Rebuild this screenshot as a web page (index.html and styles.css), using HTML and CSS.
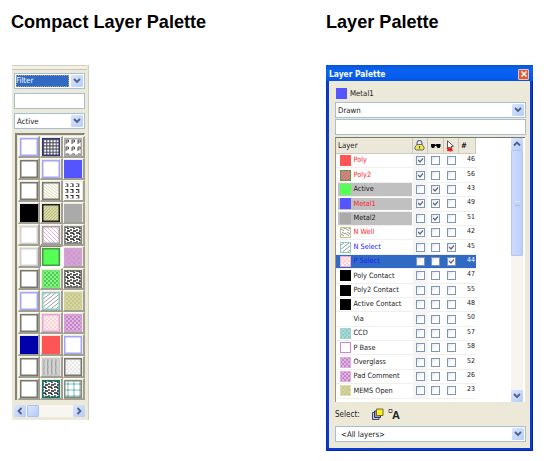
FILE: index.html
```html
<!DOCTYPE html>
<html lang="en">
<head>
<meta charset="utf-8">
<title>Layer Palette</title>
<link rel="stylesheet" href="styles.css">
</head>
<body>
<svg class="defs" width="0" height="0">
  <defs>
    <pattern id="grid" width="3.200" height="3.200" patternUnits="userSpaceOnUse"><rect width="4" height="4" fill="#fff"/><path d="M0 1.500H4M1.500 0V4" stroke="#40424e" stroke-width="1"/></pattern>
    <pattern id="pe" width="6" height="7" patternUnits="userSpaceOnUse"><rect width="6" height="7" fill="#fff"/><path d="M2 6V2H4.500V4H2" fill="none" stroke="#505050" stroke-width="1"/></pattern>
    <pattern id="dash" width="5.500" height="6" patternUnits="userSpaceOnUse"><rect width="5.500" height="6" fill="#fff"/><path d="M1 1.500H4M3.500 1V5M1 4.500H2" fill="none" stroke="#222" stroke-width="1.200"/></pattern>
    <pattern id="weave" width="6" height="6" patternUnits="userSpaceOnUse"><rect width="6" height="6" fill="#fff"/><path d="M0 1H3L4.500 3M1 3V5M3 5H6" fill="none" stroke="#202020" stroke-width="1.300"/></pattern>
    <pattern id="hatch" width="5" height="5" patternUnits="userSpaceOnUse"><rect width="5" height="5" fill="#fff"/><path d="M0 1L4 4M2 0L5 2" stroke="#777c72" stroke-width=".8"/></pattern>
    <pattern id="cream" width="4" height="3" patternUnits="userSpaceOnUse"><rect width="4" height="3" fill="#fafaf0"/><path d="M0 0L4 3" stroke="#d4d6bd" stroke-width=".8"/></pattern>
    <pattern id="khaki" width="3" height="3" patternUnits="userSpaceOnUse"><rect width="3" height="3" fill="#d8d8a4"/><path d="M0 3L3 0" stroke="#b4b47a" stroke-width=".8"/></pattern>
    <pattern id="lilac" width="4" height="4" patternUnits="userSpaceOnUse"><rect width="4" height="4" fill="#fff"/><path d="M0 0L4 4" stroke="#e0b4e0" stroke-width="1"/></pattern>
    <pattern id="slash" width="5" height="4" patternUnits="userSpaceOnUse"><rect width="5" height="4" fill="#fff"/><path d="M0 4L5 0" stroke="#88908f" stroke-width=".9"/></pattern>
    <pattern id="purple" width="4" height="4" patternUnits="userSpaceOnUse"><rect width="4" height="4" fill="#e0b5e0"/><path d="M0 0h2v2H0zM2 2h2v2H2z" fill="#c783c9"/></pattern>
    <pattern id="plum" width="5" height="5" patternUnits="userSpaceOnUse"><rect width="5" height="5" fill="#d4a2d4"/><path d="M0 0L5 5M5 0L0 5" stroke="#c994cb" stroke-width=".8"/></pattern>
    <pattern id="green" width="4" height="4" patternUnits="userSpaceOnUse"><rect width="4" height="4" fill="#93ee93"/><path d="M0 0h2v2H0zM2 2h2v2H2z" fill="#42d442"/></pattern>
    <pattern id="olive" width="4" height="4" patternUnits="userSpaceOnUse"><rect width="4" height="4" fill="#d6d6a2"/><path d="M0 0h2v2H0zM2 2h2v2H2z" fill="#c7c78a"/></pattern>
    <pattern id="pink" width="4" height="4" patternUnits="userSpaceOnUse"><rect width="4" height="4" fill="#fff1f1"/><path d="M0 0h2v2H0zM2 2h2v2H2z" fill="#ffd0d4"/></pattern>
    <pattern id="bars" width="4" height="6" patternUnits="userSpaceOnUse"><rect width="4" height="6" fill="#d4d4d4"/><path d="M1.500 0L2 3L1.500 6" fill="none" stroke="#a2a2a2" stroke-width="1.400"/></pattern>
    <pattern id="dots" width="4" height="4" patternUnits="userSpaceOnUse"><rect width="4" height="4" fill="#f7f7f7"/><path d="M0 0h2v2H0zM2 2h2v2H2z" fill="#eaeaea"/></pattern>
    <pattern id="plaid" width="6" height="6" patternUnits="userSpaceOnUse"><rect width="6" height="6" fill="#fff"/><path d="M0 4H6M4 0V6" stroke="#c0e2df" stroke-width="2"/><path d="M3 3h2v2H3z" fill="#7fc0bb"/></pattern>
    <pattern id="teal" width="4" height="4" patternUnits="userSpaceOnUse"><rect width="4" height="4" fill="#a8dad7"/><path d="M0 0h2v2H0zM2 2h2v2H2z" fill="#8fcbc8"/></pattern>
    <pattern id="brick" width="3" height="3" patternUnits="userSpaceOnUse"><rect width="3" height="3" fill="#dc8482"/><path d="M0 3L3 0" stroke="#b07870" stroke-width="1"/></pattern>
  </defs>
</svg>
<main class="page">
  <section class="column column-compact">
    <h2>Compact Layer Palette</h2>
    <div class="compact">
      <div class="grip"></div>
      <div class="combo"><span class="picked">Filter</span><span class="drop"><svg viewBox="0 0 8 6"><path d="M1 1l3 3 3-3"/></svg></span></div>
      <div class="combo"></div>
      <div class="combo"><span class="value">Active</span><span class="drop"><svg viewBox="0 0 8 6"><path d="M1 1l3 3 3-3"/></svg></span></div>
      <div class="swatches" id="swatches"></div>
      <div class="hscroll">
        <span class="sbtn"><svg viewBox="0 0 8 8"><path d="M5.500 1l-3 3 3 3"/></svg></span>
        <span class="sbtn grab"></span>
        <span class="sbtn end"><svg viewBox="0 0 8 8"><path d="M2.500 1l3 3-3 3"/></svg></span>
      </div>
    </div>
  </section>
  <section class="column">
    <h2>Layer Palette</h2>
    <div class="window">
      <header class="titlebar"><span>Layer Palette</span><span class="close"><svg viewBox="0 0 8 8"><path d="M1.500 1.500l5 5M6.500 1.500l-5 5"/></svg></span></header>
      <div class="client">
        <div class="current"><span class="chip"></span><span>Metal1</span></div>
        <div class="combo"><span class="value">Drawn</span><span class="drop"><svg viewBox="0 0 8 6"><path d="M1 1l3 3 3-3"/></svg></span></div>
        <div class="combo search"></div>
        <div class="list">
          <div class="table">
            <div class="thead">
              <span class="th-layer">Layer</span>
              <span class="th"><svg width="11" height="11" viewBox="0 0 11 11"><path d="M3 5V3a2.500 2.500 0 0 1 5 0v2" fill="none" stroke="#6468b5" stroke-width="1.200"/><path d="M3 4.500h5L10 7v2L9 10H2L1 9V7z" fill="#f4ed27" stroke="#5055a5" stroke-width=".9"/><path d="M5.500 6v2.500" stroke="#50507a" stroke-width="1.200"/></svg></span>
              <span class="th"><svg width="11" height="11" viewBox="0 0 11 11"><path d="M1 4h3.500l1 .8 1-.8h4v2.500L9.500 8h-2L6.300 6H5L4 8H2L1 6.500z" fill="#050505"/></svg></span>
              <span class="th"><svg width="11" height="12" viewBox="0 0 11 12"><path d="M2.500 .8v7.700l1.800-1.500L6 9.500l1-.6L6 6.500l2.500-.2z" fill="#fff" stroke="#333" stroke-width=".8"/><path d="M1.800 8.500L3.500 8l1 .7 1.500-1.200 .6 1.600 1 2-1.600-.5-1 .9-.9-.9-1.700.4.5-1.300z" fill="#f01010" stroke="#f01010" stroke-width=".6"/></svg></span>
              <span class="th th-num">#</span>
            </div>
            <div id="rows"></div>
          </div>
          <div class="vscroll">
            <span class="sbtn"><svg viewBox="0 0 8 6"><path d="M1 4.500l3-3 3 3"/></svg></span>
            <span class="thumb"><i></i></span>
            <span class="sbtn end"><svg viewBox="0 0 8 6"><path d="M1 1l3 3 3-3"/></svg></span>
          </div>
        </div>
        <div class="select">
          <span>Select:</span>
          <svg class="stack" width="13" height="13" viewBox="0 0 13 13"><path d="M1.500 4.500h6.500v7H1.500z" fill="#c8c8dc" stroke="#44446a"/><path d="M3.500 3h6v6.500h-6z" fill="#9898c0" stroke="#34345a"/><path d="M5.500 1h6.500v6.500H5.500z" fill="#ffed24" stroke="#716d30"/></svg>
          <svg width="5" height="13" viewBox="0 0 5 13"><path d="M1 1.500h3v3H1z" fill="#fff" stroke="#333" stroke-width=".8"/></svg>
          <b class="glyph">A</b>
        </div>
        <div class="combo all"><span class="value">&lt;All layers&gt;</span><span class="drop"><svg viewBox="0 0 8 6"><path d="M1 1l3 3 3-3"/></svg></span></div>
      </div>
    </div>
  </section>
</main>
<script src="app.js"></script>
</body>
</html>
```

FILE: styles.css
```css
* { box-sizing: border-box; }
body { margin: 0; background: #fff; width: 554px; height: 461px; overflow: hidden; font: 7.8px "DejaVu Sans Condensed", "DejaVu Sans", sans-serif; color: #222; }
.defs { display: block; }
svg { display: block; flex: none; }
.page { display: flex; padding: 12px 0 0 11px; }
.column { width: 207px; }
.column-compact { width: 315px; }
h2 { margin: 0 0 32px; height: 21px; font: bold 18.1px/21px "Liberation Sans", sans-serif; color: #000; white-space: nowrap; }

.compact { width: 77px; height: 355px; margin-left: 1px; padding: 0 3px 0 2px; background: #ece9d8; border-right: 1px solid #d0cdbe; }
.grip { height: 5px; margin: 0 -2px 3px; border-top: 1px solid #d3d0c2; border-bottom: 1px solid #c9c6b6; background: #f3f1e6; }
.combo { display: flex; align-items: stretch; height: 16px; border: 1px solid #a7bfd2; background: #fff; padding: 1px; }
.compact .combo { margin-bottom: 4px; }
.combo .value { flex: 1; padding-left: 1px; line-height: 13px; white-space: nowrap; }
.picked { flex: 1; margin: 0 2px 0 0; line-height: 12px; background: #316ac5; color: #fff; outline: 1px dotted #b6a078; outline-offset: -1px; }
.drop, .sbtn { display: flex; flex: none; align-items: center; justify-content: center; width: 12px; background: linear-gradient(135deg, #dbe6fe, #b5cbf8); border-radius: 1px; }
.drop svg { width: 8px; height: 6px; }
.drop path, .sbtn path { fill: none; stroke: #4d6185; stroke-width: 1.8; }
.swatches { display: grid; grid-template-columns: repeat(3, 22.3px); grid-auto-rows: 22px; height: 267px; margin: 1px 0 0 1px; width: 70px; padding: 1px 0 0 1px; border-left: 2px solid #85837a; border-top: 2px solid #85837a; border-right: 1px solid #f8f6ed; background: #ece9d8; }
.cell { display: flex; align-items: center; justify-content: center; border-right: 2px solid #a19e92; border-bottom: 2px solid #a19e92; border-left: 1px solid #faf9f3; border-top: 1px solid #faf9f3; }
.cell.on { border-color: #8a887c #fff #fff #8a887c; }
.hscroll { display: flex; height: 12px; margin-top: 5px; background: #f7f6f0; }
.hscroll .sbtn { height: 12px; }
.sbtn svg { width: 8px; height: 8px; }
.grab { margin-left: 1px; border: 1px solid #a9c1f5; }
.hscroll .end { margin-left: auto; }

.window { width: 207px; height: 386px; padding: 0 3px 3px; background: #0b3bd4; box-shadow: inset 1px 0 #0831b4, inset -1px -1px #0825a0; }
.titlebar { display: flex; align-items: center; justify-content: space-between; height: 16px; margin: 0 -3px; padding: 2px 4px 0 3px; background: linear-gradient(#0755d8, #0b62ef 30%, #055df0 75%, #0554dd); color: #fff; font: bold 8.4px/13px "DejaVu Sans Condensed", sans-serif; }
.close { display: flex; align-items: center; justify-content: center; width: 11px; height: 11px; border: 1px solid #f0c0b5; border-radius: 1px; background: #df5d3b; }
.close svg { width: 8px; height: 8px; }
.close path { stroke: #fff; stroke-width: 1.5; }
.client { height: 367px; padding: 7px 3px 0 7px; background: #ece9d8; }
.current { display: flex; gap: 3px; height: 14px; line-height: 11px; }
.chip { width: 11px; height: 11px; background: #5555ff; }
.client .combo { width: 191px; margin-left: -1px; }
.client .search { margin-top: 1px; }
.list { display: flex; justify-content: space-between; width: 190px; height: 265px; margin: 2px 0 0 -1px; padding: 0 2px 0 0; border-left: 1px solid #96958c; border-top: 1px solid #77766f; background: #fff; }
.table { width: 140px; }
.thead { display: flex; height: 16px; background: #ebe8d9; border-bottom: 1px solid #cfccbd; }
.th-layer { width: 76.5px; padding-left: 2px; line-height: 15px; border-right: 1px solid #cbc8b9; }
.th { display: flex; align-items: center; justify-content: center; width: 15.5px; border-right: 1px solid #cbc8b9; }
.th-num { width: 17px; font-style: italic; font-weight: bold; justify-content: flex-start; padding-left: 2px; }
.row { display: flex; align-items: center; height: 14.4px; border-bottom: 1px solid #f0efeb; white-space: nowrap; }
.name { display: flex; align-items: center; width: 74px; height: 12.5px; margin: 0 1.5px; padding-left: 2px; gap: 3px; font-size: 7.3px; }
.name span { line-height: 9px; margin-top: -1.5px; }
.shaded .name { background: #c0c0c0; }
.red { color: #f8262d; }
.blue { color: #2020f5; }
.check { display: flex; align-items: center; justify-content: center; width: 15.3px; height: 14px; }
.check:nth-child(2) { background: #f5f5f5; }
.check i { width: 9px; height: 9px; border: 1px solid #8096b5; background: linear-gradient(135deg, #dfe3ec, #fff 55%); }
.check svg { width: 7px; height: 7px; }
.check path { fill: none; stroke: #606572; stroke-width: 1.2; }
.num { width: 16px; text-align: right; font-size: 6.9px; line-height: 9px; margin-top: -2px; }
.selected { background: #316ac5; }
.selected .check { background: none; }
.selected .num { color: #fff; }
.vscroll { display: flex; flex-direction: column; width: 12px; background: #f6f5ef; }
.vscroll .sbtn { height: 12px; }
.vscroll .sbtn svg { height: 6px; }
.vscroll .end { margin-top: auto; }
.thumb { display: flex; align-items: center; justify-content: center; height: 106px; border: 1px solid #b0c6f5; border-radius: 1px; background: linear-gradient(90deg, #cbdafd, #bdcffa); }
.thumb i { width: 5px; height: 5px; border-top: 1px solid #e4edff; border-bottom: 1px solid #a2bcf0; }
.select { display: flex; align-items: center; height: 24px; margin-left: -1px; }
.select > span { width: 36px; font-size: 8px; }
.select .stack { margin-right: 4px; }
.glyph { font: bold 11px/12px "Liberation Sans", sans-serif; color: #222; margin: 2px 0 0 -1px; }
.all .value { padding-left: 4px; font-size: 7.8px; }
```

FILE: app.js
```js
const LIGHT = "#a5a5ff", GRAY = "#777770", PALE = "#d2d2d2";
// Each swatch: [fill, border]
const cells = [
  ["#fff", LIGHT], ["grid", "#343474"], ["pe", "#aaa"],
  ["#fff", GRAY], ["#fff", LIGHT], ["#5555ff", "#5555ff"],
  ["#fff", GRAY], ["cream", GRAY], ["dash", "#fff"],
  ["#000", "#000"], ["khaki", "#202020"], ["#aaa", "#aaa"],
  ["#fff", PALE], ["lilac", "#a69fa6"], ["weave", "#888"],
  ["#fff", PALE], ["#55ff55", "#4a984a"], ["plum", "#d4a2d4"],
  ["#fff", GRAY], ["green", "#7be67b"], ["weave", GRAY],
  ["#fff", LIGHT], ["slash", "#91cac7"], ["olive", "#d0d09b"],
  ["#fff", GRAY], ["pink", "#e2a5d4"], ["purple", "#d5a0d6"],
  ["#0000aa", "#0000aa"], ["#ff5555", "#ff5555"], ["#fff", LIGHT],
  ["#fff", GRAY], ["bars", "#c8c8c8"], ["dots", GRAY],
  ["#fff", GRAY], ["weave", "#147472"], ["plaid", "#858b81"]
];
// Each layer: [name, number, text class, shaded, checked columns, fill, border]
const layers = [
  ["Poly", 46, "red", 0, "0", "#ff5555", "#ff5555"],
  ["Poly2", 56, "red", 0, "0", "brick", "#5b9b45"],
  ["Active", 43, "", 1, "1", "#55ff55", "#55ff55"],
  ["Metal1", 49, "red", 1, "01", "#5555ff", "#5555ff"],
  ["Metal2", 51, "", 1, "1", "#aaa", "#aaa"],
  ["N Well", 42, "red", 0, "0", "hatch", "#c5c58b"],
  ["N Select", 45, "blue", 0, "2", "slash", "#8bcac5"],
  ["P Select", 44, "blue", 0, "2", "pink", "#edacd0"],
  ["Poly Contact", 47, "", 0, "", "#000", "#000"],
  ["Poly2 Contact", 55, "", 0, "", "#000", "#000"],
  ["Active Contact", 48, "", 0, "", "#000", "#000"],
  ["Via", 50, "", 0, "", "#fff", "#fff"],
  ["CCD", 57, "", 0, "", "teal", "#9fd4d1"],
  ["P Base", 58, "", 0, "", "#fff", "#cf86d2"],
  ["Overglass", 52, "", 0, "", "purple", "#dcb0dd"],
  ["Pad Comment", 26, "", 0, "", "purple", "#dcb0dd"],
  ["MEMS Open", 23, "", 0, "", "olive", "#dbdbae"]
];

function swatch(fill, border, size, stroke) {
  const paint = fill[0] === "#" ? fill : `url(#${fill})`;
  return `<svg width="${size}" height="${size}"><rect x="${stroke / 2}" y="${stroke / 2}" width="${size - stroke}" height="${size - stroke}" fill="${paint}" stroke="${border}" stroke-width="${stroke}"/></svg>`;
}

document.getElementById("swatches").innerHTML = cells.map(([fill, border], i) =>
  `<div class="cell${i === 16 ? " on" : ""}">${swatch(fill, border, 18, 1.5)}</div>`).join("");

document.getElementById("rows").innerHTML = layers.map(([name, num, tone, shaded, checks, fill, border]) => {
  const boxes = [0, 1, 2].map(c =>
    `<span class="check"><i>${checks.includes(c) ? '<svg viewBox="0 0 7 7"><path d="M1.200 3l1.800 2 3-3.500"/></svg>' : ""}</i></span>`).join("");
  const state = (shaded ? " shaded" : "") + (name === "P Select" ? " selected" : "");
  return `<div class="row${state}"><div class="name">${swatch(fill, border, 11, 1)}<span class="${tone}">${name}</span></div>${boxes}<span class="num">${num}</span></div>`;
}).join("");
```
